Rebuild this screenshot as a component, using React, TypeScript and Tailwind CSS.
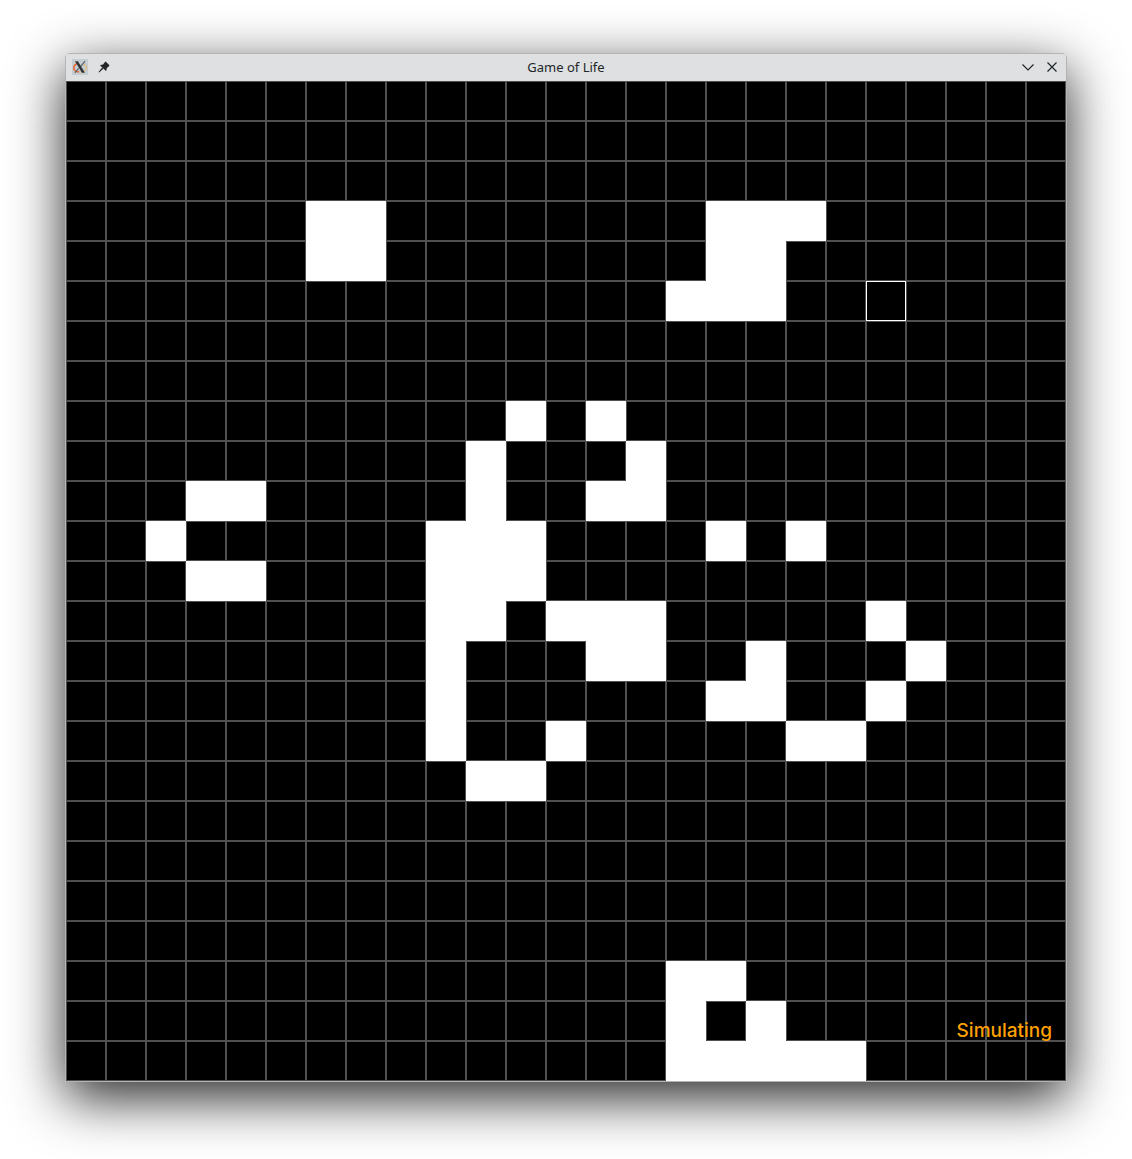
import React, { useState } from "react";

const SIZE = 25;

const INITIAL: Record<number, number[]> = {
  3: [6, 7, 16, 17, 18],
  4: [6, 7, 16, 17],
  5: [15, 16, 17],
  8: [11, 13],
  9: [10, 14],
  10: [3, 4, 10, 13, 14],
  11: [2, 9, 10, 11, 16, 18],
  12: [3, 4, 9, 10, 11],
  13: [9, 10, 12, 13, 14, 20],
  14: [9, 13, 14, 17, 21],
  15: [9, 16, 17, 20],
  16: [9, 12, 18, 19],
  17: [10, 11],
  22: [15, 16],
  23: [15, 17],
  24: [15, 16, 17, 18, 19],
};

const CURSOR = { row: 5, col: 20 };

function XLogo() {
  return (
    <svg viewBox="0 0 16 16" className="size-4" aria-hidden="true">
      <rect width="16" height="16" fill="#c3cdd2" />
      <path d="M6.5 4.2C3.8 4.8 1.8 6.6 1.8 8.8c0 2.3 2.3 4 5.4 4.3" fill="none" stroke="#f0602c" strokeWidth="1.5" />
      <path d="M10.5 4.9c2.4.6 4 2 4 3.9 0 2.3-2.6 4.2-6.2 4.3" fill="none" stroke="#e6bd83" strokeWidth="1.3" />
      <path d="M13 2.2 8.6 7.6M6.6 9.4 3 13.8" fill="none" stroke="#596066" strokeWidth="1.1" />
      <path d="M3 2.2h2.9l7 11.6H9.9z" fill="#303437" />
    </svg>
  );
}

function PinIcon() {
  return (
    <svg viewBox="0 0 12 12" className="size-3" aria-hidden="true" fill="#232629">
      <path d="M7.6 0.6 11.4 4.2 11 5.2 8.8 7.1 8.4 9.4 7.7 9.8 2.1 4.6 2.6 3.9 5 3.6 7 1z" />
      <path d="M4.2 6.6 5.4 7.8 1.1 11.5 0.5 11z" />
    </svg>
  );
}

function TitleBar() {
  return (
    <header className="grid h-[27px] grid-cols-3 items-center rounded-t-[3px] bg-[#dee0e2] px-1.5 pb-0.5">
      <div className="flex items-center gap-2.5">
        <button type="button" aria-label="Window menu">
          <XLogo />
        </button>
        <button type="button" aria-label="Keep on all desktops">
          <PinIcon />
        </button>
      </div>
      <h1 className="text-center text-[13px] leading-5 text-[#232629]">Game of Life</h1>
      <div className="flex items-center justify-end gap-2">
        <button type="button" aria-label="Minimize">
          <svg viewBox="0 0 16 16" className="size-4" aria-hidden="true" fill="none" stroke="#232629" strokeWidth="1.2">
            <path d="M2.5 5.5 8 11l5.5-5.5" />
          </svg>
        </button>
        <button type="button" aria-label="Close">
          <svg viewBox="0 0 16 16" className="size-4" aria-hidden="true" fill="none" stroke="#232629" strokeWidth="1.2">
            <path d="m3.5 3.5 9 9m0-9-9 9" />
          </svg>
        </button>
      </div>
    </header>
  );
}

function Cell({ alive, cursor, label, onToggle }: { alive: boolean; cursor: boolean; label: string; onToggle: () => void }) {
  const look = alive ? "border-white bg-white" : cursor ? "border-white bg-black" : "border-[#505050] bg-black";
  return <button type="button" aria-label={label} aria-pressed={alive} onClick={onToggle} className={"block aspect-square border " + look} />;
}

export default function App() {
  const [cells, setCells] = useState<boolean[]>(() =>
    Array.from({ length: SIZE * SIZE }, (_, i) => (INITIAL[Math.floor(i / SIZE)] ?? []).includes(i % SIZE)),
  );
  const toggle = (index: number) => setCells((prev) => prev.map((alive, i) => (i === index ? !alive : alive)));

  return (
    <div className="bg-white px-[65px] pt-[53px] pb-[77px] font-['Noto_Sans',sans-serif]">
      <main className="rounded-t-[4px] border border-[#b2b4b6] shadow-[0_16px_54px_rgba(0,0,0,0.85)]">
        <TitleBar />
        <div className="relative">
          <div className="grid grid-cols-[repeat(25,minmax(0,1fr))] bg-black">
            {cells.map((alive, i) => {
              const row = Math.floor(i / SIZE);
              const col = i % SIZE;
              return (
                <Cell
                  key={i}
                  alive={alive}
                  cursor={row === CURSOR.row && col === CURSOR.col}
                  label={`Row ${row + 1}, column ${col + 1}`}
                  onToggle={() => toggle(i)}
                />
              );
            })}
          </div>
          <p className="pointer-events-none absolute right-3.5 bottom-10 font-['Inter',sans-serif] text-[19px] leading-5 font-medium text-[#ffa100]">
            Simulating
          </p>
        </div>
      </main>
    </div>
  );
}
